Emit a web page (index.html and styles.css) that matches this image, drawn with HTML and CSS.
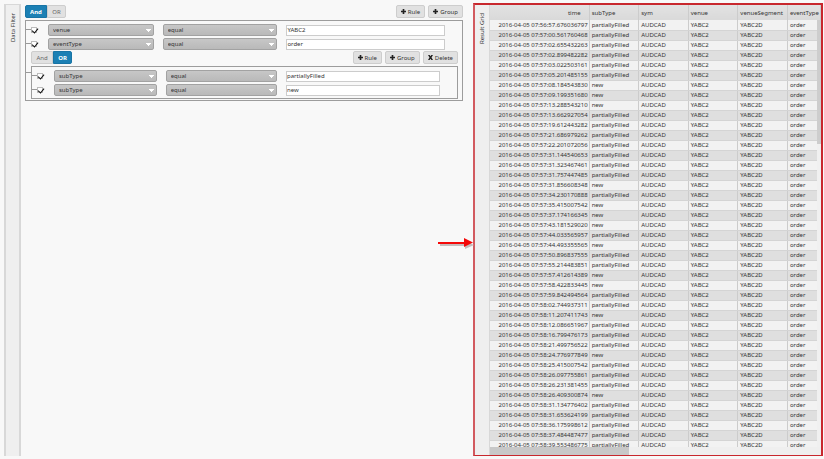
FILE: index.html
```html
<!DOCTYPE html>
<html lang="en">
<head>
<meta charset="utf-8">
<title>Data Filter</title>
<link rel="stylesheet" href="styles.css">
</head>
<body>
<main class="app">
  <section class="filter">
    <h2 class="side-tab"><span>Data Filter</span></h2>
    <div class="builder">
      <div class="toolbar">
        <div class="toggle"><button class="btn active">And</button><button class="btn">OR</button></div>
        <div class="actions">
          <button class="btn"><svg class="icon" viewBox="0 0 6 6"><path d="M2 0h2v2h2v2H4v2H2V4H0V2h2z"/></svg>Rule</button>
          <button class="btn"><svg class="icon" viewBox="0 0 6 6"><path d="M2 0h2v2h2v2H4v2H2V4H0V2h2z"/></svg>Group</button>
        </div>
      </div>
      <div class="group">
        <div class="rule">
          <input type="checkbox" checked aria-label="Enable venue rule">
          <select aria-label="Field"><option>venue</option></select>
          <select aria-label="Operator"><option>equal</option></select>
          <input class="value" type="text" value="YABC2" aria-label="Value">
        </div>
        <div class="rule">
          <input type="checkbox" checked aria-label="Enable eventType rule">
          <select aria-label="Field"><option>eventType</option></select>
          <select aria-label="Operator"><option>equal</option></select>
          <input class="value" type="text" value="order" aria-label="Value">
        </div>
        <div class="nested">
          <div class="toolbar">
            <div class="toggle"><button class="btn">And</button><button class="btn active">OR</button></div>
            <div class="actions">
              <button class="btn"><svg class="icon" viewBox="0 0 6 6"><path d="M2 0h2v2h2v2H4v2H2V4H0V2h2z"/></svg>Rule</button>
              <button class="btn"><svg class="icon" viewBox="0 0 6 6"><path d="M2 0h2v2h2v2H4v2H2V4H0V2h2z"/></svg>Group</button>
              <button class="btn"><svg class="icon" viewBox="0 0 6 6"><path d="M0 0h2l1 1.500L4 0h2L4.200 3 6 6H4L3 4.500 2 6H0l1.800-3z"/></svg>Delete</button>
            </div>
          </div>
          <div class="group">
            <div class="rule">
              <input type="checkbox" checked aria-label="Enable first subType rule">
              <select aria-label="Field"><option>subType</option></select>
              <select aria-label="Operator"><option>equal</option></select>
              <input class="value" type="text" value="partiallyFilled" aria-label="Value">
            </div>
            <div class="rule">
              <input type="checkbox" checked aria-label="Enable second subType rule">
              <select aria-label="Field"><option>subType</option></select>
              <select aria-label="Operator"><option>equal</option></select>
              <input class="value" type="text" value="new" aria-label="Value">
            </div>
          </div>
        </div>
      </div>
    </div>
  </section>
  <section class="results">
    <h2 class="side-tab"><span>Result Grid</span></h2>
    <div class="grid">
      <div class="viewport">
        <table>
          <colgroup><col class="time-col"><col class="col"><col class="col"><col class="col"><col class="col"><col></colgroup>
          <thead><tr><th>time</th><th>subType</th><th>sym</th><th>venue</th><th>venueSegment</th><th>eventType</th></tr></thead>
          <tbody id="rows"></tbody>
        </table>
        <div class="v-scroll"></div>
      </div>
      <div class="h-scroll"></div>
    </div>
    <svg class="arrow" viewBox="0 0 36 12"><path class="shadow" d="M2 7h25V4l9 4-9 4V9H2z"/><path class="line" d="M0 5h26V1l9 4.500L26 10V7H0z"/></svg>
  </section>
</main>
<script src="rows.js"></script>
</body>
</html>
```
FILE: styles.css
```css
* { box-sizing: border-box; }
body {
  margin: 0;
  background: #f8f8f8;
  color: #333;
  font: 6px/8px "Noto Sans", "Open Sans", sans-serif;
}
button, input, select { font: inherit; color: inherit; margin: 0; }
.app {
  display: grid;
  grid-template-columns: 463fr 350fr;
  grid-template-rows: minmax(0, 1fr);
  gap: 10px;
  height: 100vh;
  padding: 3px 1px 3px 0;
}
.filter { display: flex; min-width: 0; padding: 1px 0 0 4px; }
.side-tab {
  flex: none;
  display: flex;
  justify-content: center;
  align-items: flex-start;
  width: 17px;
  margin: 0;
  padding-top: 8px;
  background: #efefef;
  border: solid #d8d8d8;
  border-width: 1px 2px 0;
  font-size: 6px;
  font-weight: 400;
}
.side-tab span { writing-mode: vertical-rl; transform: rotate(180deg); }

.builder { flex: 1; min-width: 0; padding: 1px 0 0 4px; }
.toolbar { display: flex; justify-content: space-between; }
.toggle { display: flex; }
.actions { display: flex; gap: 3px; }
.btn {
  display: flex;
  align-items: center;
  justify-content: center;
  gap: 2px;
  height: 13px;
  padding: 0 4px;
  background: #e1e1e1;
  border: 1px solid #cdcdcd;
  border-radius: 2px;
}
.toggle .btn { min-width: 19px; color: #666; }
.toggle .btn:first-child { min-width: 22px; border-radius: 2px 0 0 2px; }
.toggle .btn:last-child { border-radius: 0 2px 2px 0; }
.toggle .btn.active { background: #1c80b4; border-color: #1874a5; color: #fff; font-weight: 700; }
.icon { width: 5px; height: 5px; fill: #222; }

.group { margin-top: 2px; padding: 2px 0 1px; border: 1px solid #9c9c9c; }
.rule {
  position: relative;
  display: grid;
  grid-template-columns: 8px 106fr 115fr 159fr;
  column-gap: 9px;
  align-items: center;
  height: 14px;
  padding: 0 17px 0 5px;
}
.rule::before, .nested::before {
  content: "";
  position: absolute;
  left: 0;
  top: 6px;
  width: 5px;
  border-top: 1px solid #999;
}
.rule input[type="checkbox"] {
  appearance: none;
  position: relative;
  width: 6px;
  height: 6px;
  background: #fff;
  border: 1px solid #bbb;
}
.rule input[type="checkbox"]::after {
  content: "";
  position: absolute;
  left: 1px;
  top: -1px;
  width: 3px;
  height: 5px;
  border: solid #111;
  border-width: 0 1px 1px 0;
  transform: rotate(40deg);
}
.rule select {
  appearance: none;
  min-width: 0;
  height: 12px;
  padding: 0 4px;
  border: 1px solid #a2a2a2;
  border-radius: 2px;
  background:
    linear-gradient(225deg, #fff 50%, transparent 50%) right 3px top 4px / 3px 3px no-repeat,
    linear-gradient(135deg, #fff 50%, transparent 50%) right 3px top 4px / 3px 3px no-repeat,
    linear-gradient(#c7c7c7, #b9b9b9);
  background:
    linear-gradient(#fff, #fff) right 2px top 4px / 5px 1px no-repeat,
    linear-gradient(#fff, #fff) right 3px top 5px / 3px 1px no-repeat,
    linear-gradient(#fff, #fff) right 4px top 6px / 1px 1px no-repeat,
    linear-gradient(#c7c7c7, #b9b9b9);
}
.value {
  min-width: 0;
  width: 100%;
  height: 11px;
  padding: 0;
  background: #fff;
  border: 1px solid #ccc;
}
.nested { position: relative; padding: 0 4px 0 5px; }
.nested::before { top: 21px; }

.results {
  position: relative;
  display: flex;
  min-width: 0;
  border: solid #c8272d;
  border-width: 2px 2px 1px;
  border-left-color: #d25a5f;
}
.results .side-tab { width: 15px; border-width: 0 1px 0 0; }
.grid { flex: 1; min-width: 0; display: flex; flex-direction: column; }
.viewport { position: relative; flex: 1; min-height: 0; overflow: hidden; }
table { width: 100%; table-layout: fixed; border-collapse: collapse; }
.time-col { width: 30%; }
.col { width: 15%; }
th, td {
  height: 10px;
  padding: 0 2px;
  border-right: 1px solid #ccc;
  text-align: left;
  font-weight: 400;
  line-height: 8px;
  white-space: nowrap;
}
th { height: 15px; background: linear-gradient(#e2e2e2, #d9d9d9); }
th:first-child { text-align: right; padding-right: 8px; }
td { border-bottom: 1px solid #d4d4d4; }
td:first-child { padding-right: 1px; text-align: right; }
tbody tr { background: #f2f2f2; }
tbody tr:nth-child(even) { background: #dfdfdf; }
.v-scroll {
  position: absolute;
  top: 15px;
  right: 0;
  bottom: 0;
  width: 4px;
  background: linear-gradient(#cdcdcd 29%, #f0f0f0 29%);
}
.h-scroll { height: 8px; background: linear-gradient(90deg, #c8c8c8 42%, #efefef 42%); }
.arrow {
  position: absolute;
  left: -37px;
  top: 232px;
  width: 36px;
  height: 12px;
}
.shadow { fill: #c4bcbc; }
.line { fill: #f40808; }
```
FILE: rows.js
```js
// Each event is a time followed by its kind: p = partiallyFilled, n = new.
const events = `07:56:57.676036797 p
07:57:00.561760468 p
07:57:02.655432263 p
07:57:02.899482282 p
07:57:03.022503161 p
07:57:05.201485155 p
07:57:08.184543830 n
07:57:09.199351680 n
07:57:13.288543210 n
07:57:13.662927054 p
07:57:19.612443282 p
07:57:21.686979262 p
07:57:22.201072056 p
07:57:31.144540653 p
07:57:31.323467461 p
07:57:31.757447485 p
07:57:31.856608348 n
07:57:34.230170888 p
07:57:35.415007542 n
07:57:37.174166345 n
07:57:43.181529020 n
07:57:44.033565957 p
07:57:44.493355565 n
07:57:50.896837555 p
07:57:55.214483851 p
07:57:57.412614389 n
07:57:58.422833445 n
07:57:59.842494564 p
07:58:02.744937311 p
07:58:11.207411743 n
07:58:12.086651967 p
07:58:16.799476173 p
07:58:21.499756522 p
07:58:24.776977849 n
07:58:25.415007542 p
07:58:26.097755861 p
07:58:26.231381455 p
07:58:26.409300874 n
07:58:31.134776402 p
07:58:31.653624199 p
07:58:36.175998612 p
07:58:37.484487477 p
07:58:39.553486775 p`.split("\n");

const body = document.getElementById("rows");
for (const event of events) {
  const [time, kind] = event.split(" ");
  const row = body.insertRow();
  const subType = kind === "p" ? "partiallyFilled" : "new";
  for (const text of [`2016-04-05 ${time}`, subType, "AUDCAD", "YABC2", "YABC2D", "order"]) {
    row.insertCell().textContent = text;
  }
}
```
